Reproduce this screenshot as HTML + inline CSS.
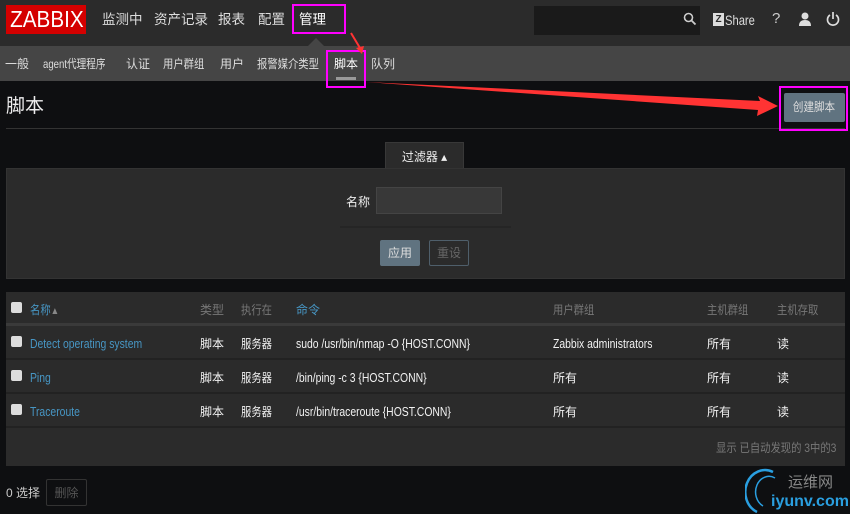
<!DOCTYPE html>
<html><head><meta charset="utf-8"><style>
*{margin:0;padding:0;box-sizing:border-box}
body{width:850px;height:514px;background:#0e0f11;font-family:"Liberation Sans","Noto Sans CJK SC",sans-serif;color:#f2f2f2;position:relative;overflow:hidden;font-size:12px}
.a{position:absolute;white-space:nowrap;line-height:14px}
.t{transform:scaleX(.86);transform-origin:0 50%}
.u{font-size:13px;transform:scaleX(.8);transform-origin:0 50%}
.top{left:0;top:0;width:850px;height:46px;background:#2b2b2b}
.sub{left:0;top:46px;width:850px;height:35px;background:#454545}
.logo{left:6px;top:5px;width:80px;height:29px;background:#d40000;color:#fff;font-size:23px;line-height:29px;text-align:center}
.nav{top:11px;font-size:13.5px;color:#ddd;line-height:18px}
.sn{top:57px;font-size:12px;color:#ddd}
.mag{border:2px solid #ff00ff}
.row{left:6px;width:839px;height:34px;border-bottom:2px solid #222;}
.cb{width:11px;height:11px;background:#ddd;border-radius:2px}
.link{color:#4796c4}
.hd{color:#777}
</style></head><body>
<div class="a top"></div>
<div class="a sub"></div>
<div class="a logo"><span style="display:inline-block;transform:scaleX(.9)">ZABBIX</span></div>
<div class="a nav" style="left:102px">监测中</div>
<div class="a nav" style="left:154px">资产记录</div>
<div class="a nav" style="left:218px">报表</div>
<div class="a nav" style="left:258px">配置</div>
<div class="a nav" style="left:299px;color:#fff">管理</div>
<div class="a mag" style="left:292px;top:4px;width:54px;height:30px"></div>
<div class="a" style="left:308px;top:38px;width:0;height:0;border-left:8px solid transparent;border-right:8px solid transparent;border-bottom:8px solid #454545"></div>
<div class="a" style="left:534px;top:6px;width:166px;height:29px;background:#1a1a1a"></div>
<svg class="a" style="left:683px;top:12px" width="14" height="14"><circle cx="5.5" cy="5.5" r="4" fill="none" stroke="#ccc" stroke-width="1.6"/><line x1="8.5" y1="8.5" x2="12.5" y2="12.5" stroke="#ccc" stroke-width="1.8"/></svg>
<div class="a" style="left:713px;top:13px;width:11px;height:13px;background:#ddd;color:#2b2b2b;font-size:10px;font-weight:bold;line-height:13px;text-align:center">Z</div>
<div class="a u" style="left:725px;top:13px;font-size:14px;color:#ddd">Share</div>
<div class="a" style="left:772px;top:12px;font-size:15px;color:#ccc">?</div>
<svg class="a" style="left:798px;top:12px" width="14" height="14"><circle cx="7" cy="4" r="3.5" fill="#ddd"/><path d="M1 14 Q1 8 7 8 Q13 8 13 14Z" fill="#ddd"/></svg>
<svg class="a" style="left:826px;top:11px" width="14" height="16"><path d="M4 4 A5.5 5.5 0 1 0 10 4" fill="none" stroke="#ddd" stroke-width="1.7"/><line x1="7" y1="1" x2="7" y2="8" stroke="#ddd" stroke-width="1.7"/></svg>
<div class="a sn" style="left:5px">一般</div>
<div class="a sn u" style="left:43px">agent代理程序</div>
<div class="a sn" style="left:126px">认证</div>
<div class="a sn t" style="left:163px">用户群组</div>
<div class="a sn" style="left:220px">用户</div>
<div class="a sn t" style="left:257px">报警媒介类型</div>
<div class="a sn" style="left:334px;color:#fff">脚本</div>
<div class="a" style="left:336px;top:77px;width:20px;height:3px;background:#999"></div>
<div class="a sn" style="left:371px">队列</div>
<div class="a mag" style="left:326px;top:50px;width:40px;height:38px"></div>
<div class="a" style="left:6px;top:96px;font-size:19px;line-height:22px;color:#eee">脚本</div>
<div class="a" style="left:6px;top:128px;width:839px;height:1px;background:#333"></div>
<div class="a" style="left:784px;top:93px;width:61px;height:29px;background:#607380;border-radius:2px;color:#ddd;font-size:12px;line-height:29px;text-align:center"><span style="display:inline-block;transform:scaleX(.88)">创建脚本</span></div>
<div class="a mag" style="left:779px;top:86px;width:69px;height:45px"></div>
<svg class="a" style="left:0;top:0" width="850" height="140"><line x1="351" y1="33" x2="360" y2="48" stroke="#f33" stroke-width="2"/><polygon points="356,48 364,46 362,54" fill="#f33"/><polygon points="366,82 760,101 758,96 778,106 757,116 758,110" fill="#f33"/></svg>
<div class="a" style="left:385px;top:142px;width:79px;height:26px;background:#2b2b2b;border:1px solid #383838;border-bottom:none;text-align:center;line-height:28px;color:#eee">过滤器 ▴</div>
<div class="a" style="left:6px;top:168px;width:839px;height:111px;background:#2b2b2b;border:1px solid #333"></div>
<div class="a" style="left:346px;top:195px;color:#eee">名称</div>
<div class="a" style="left:376px;top:187px;width:126px;height:27px;background:#383838;border:1px solid #444"></div>
<div class="a" style="left:340px;top:226px;width:171px;height:2px;background:#252525"></div>
<div class="a" style="left:380px;top:240px;width:40px;height:26px;background:#607380;border-radius:2px;color:#ddd;line-height:27px;text-align:center">应用</div>
<div class="a" style="left:429px;top:240px;width:40px;height:26px;border:1px solid #4f5f6b;border-radius:2px;color:#666;line-height:25px;text-align:center">重设</div>
<div class="a" style="left:6px;top:292px;width:839px;height:174px;background:#2b2b2b"></div>
<div class="a row" style="top:292px;border-bottom:3px solid #3a3a3a"></div>
<div class="a row" style="top:326px"></div>
<div class="a row" style="top:360px"></div>
<div class="a row" style="top:394px"></div>
<div class="a cb" style="left:11px;top:302px"></div>
<div class="a link t" style="left:30px;top:303px">名称<span style="color:#888;font-size:10px">▲</span></div>
<div class="a hd" style="left:200px;top:303px">类型</div>
<div class="a hd t" style="left:241px;top:303px">执行在</div>
<div class="a link" style="left:296px;top:303px">命令</div>
<div class="a hd t" style="left:553px;top:303px">用户群组</div>
<div class="a hd t" style="left:707px;top:303px">主机群组</div>
<div class="a hd t" style="left:777px;top:303px">主机存取</div>
<div class="a cb" style="left:11px;top:336px"></div>
<div class="a link u" style="left:30px;top:337px">Detect operating system</div>
<div class="a" style="left:200px;top:337px">脚本</div><div class="a t" style="left:241px;top:337px">服务器</div>
<div class="a u" style="left:296px;top:337px">sudo /usr/bin/nmap -O {HOST.CONN}</div>
<div class="a u" style="left:553px;top:337px">Zabbix administrators</div>
<div class="a" style="left:707px;top:337px">所有</div><div class="a" style="left:777px;top:337px">读</div>
<div class="a cb" style="left:11px;top:370px"></div>
<div class="a link u" style="left:30px;top:371px">Ping</div>
<div class="a" style="left:200px;top:371px">脚本</div><div class="a t" style="left:241px;top:371px">服务器</div>
<div class="a u" style="left:296px;top:371px">/bin/ping -c 3 {HOST.CONN}</div>
<div class="a" style="left:553px;top:371px">所有</div>
<div class="a" style="left:707px;top:371px">所有</div><div class="a" style="left:777px;top:371px">读</div>
<div class="a cb" style="left:11px;top:404px"></div>
<div class="a link u" style="left:30px;top:405px">Traceroute</div>
<div class="a" style="left:200px;top:405px">脚本</div><div class="a t" style="left:241px;top:405px">服务器</div>
<div class="a u" style="left:296px;top:405px">/usr/bin/traceroute {HOST.CONN}</div>
<div class="a" style="left:553px;top:405px">所有</div>
<div class="a" style="left:707px;top:405px">所有</div><div class="a" style="left:777px;top:405px">读</div>
<div class="a t" style="left:716px;top:441px;color:#777">显示 已自动发现的 3中的3</div>
<div class="a" style="left:6px;top:486px;color:#ccc">0 选择</div>
<div class="a" style="left:46px;top:479px;width:41px;height:27px;border:1px solid #333;border-radius:2px;color:#555;line-height:27px;text-align:center">删除</div>
<svg class="a" style="left:745px;top:468px" width="40" height="46"><path d="M28 4 A18 20 0 0 0 12 44" fill="none" stroke="#2a9fe0" stroke-width="2.5"/><path d="M30 10 A12 14 0 0 0 18 38" fill="none" stroke="#2a9fe0" stroke-width="1.5"/></svg>
<div class="a" style="left:788px;top:474px;color:#888;font-size:15px;line-height:18px">运维网</div>
<div class="a" style="left:771px;top:493px;color:#2a9fe0;font-size:16px;font-weight:bold;line-height:18px">iyunv.com</div>
</body></html>
